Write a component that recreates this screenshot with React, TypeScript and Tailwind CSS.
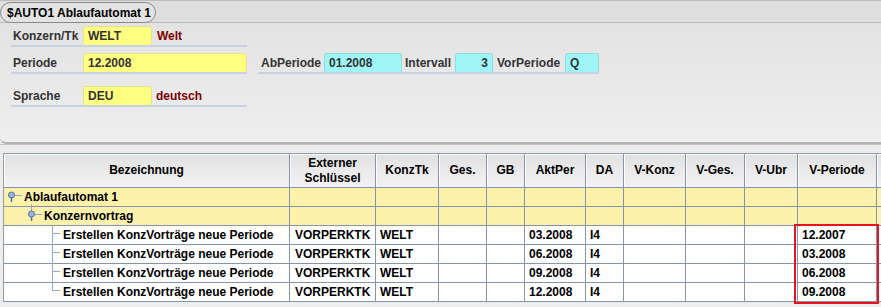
import React from 'react';

// Spaltenbreiten der Tabelle (inkl. rechter Rasterlinie)
const GRID =
  'grid grid-cols-[286px_86px_63px_48px_38px_61px_38px_62px_59px_53px_79px_60px]';

const headers = [
  'Bezeichnung',
  'Externer\nSchlüssel',
  'KonzTk',
  'Ges.',
  'GB',
  'AktPer',
  'DA',
  'V-Konz',
  'V-Ges.',
  'V-Ubr',
  'V-Periode',
  '',
];

const leafs = [
  { akt: '03.2008', vper: '12.2007' },
  { akt: '06.2008', vper: '03.2008' },
  { akt: '09.2008', vper: '06.2008' },
  { akt: '12.2008', vper: '09.2008' },
];

type TreeKind = 'root' | 'group' | 'leaf' | 'last';

function TreeGlyph({ kind }: { kind: TreeKind }) {
  const line = '#95a7c4';
  if (kind === 'root') {
    return (
      <svg width="20" height="18" className="shrink-0 overflow-visible">
        <line x1="10.5" y1="7.5" x2="18" y2="7.5" stroke={line} />
        <line x1="7.5" y1="10" x2="7.5" y2="14" stroke="#4f6fa8" strokeWidth="1.5" />
        <circle cx="7.5" cy="7" r="3" fill="#9cb6e2" stroke="#4f6fa8" />
      </svg>
    );
  }
  if (kind === 'group') {
    return (
      <svg width="40" height="18" className="shrink-0 overflow-visible">
        <line x1="27.5" y1="-3" x2="27.5" y2="4" stroke={line} />
        <line x1="30.5" y1="7.5" x2="38" y2="7.5" stroke={line} />
        <line x1="27.5" y1="10" x2="27.5" y2="14" stroke="#4f6fa8" strokeWidth="1.5" />
        <circle cx="27.5" cy="7" r="3" fill="#9cb6e2" stroke="#4f6fa8" />
      </svg>
    );
  }
  return (
    <svg width="59" height="18" className="shrink-0 overflow-visible">
      <line x1="48.5" y1="-1" x2="48.5" y2={kind === 'last' ? 8 : 19} stroke={line} />
      <line x1="48.5" y1="7.5" x2="56" y2="7.5" stroke={line} />
    </svg>
  );
}

function FormLabel({ children, w }: { children: React.ReactNode; w: string }) {
  return <span className={`${w} shrink-0 pl-[2px] text-[#333]`}>{children}</span>;
}

function Field({
  value,
  w,
  tone,
  right,
}: {
  value: string;
  w: string;
  tone: 'yellow' | 'cyan';
  right?: boolean;
}) {
  const color =
    tone === 'yellow'
      ? 'bg-[#ffff80] border-[#e2e29a]'
      : 'bg-[#a0f6f6] border-[#8fdcdc]';
  return (
    <div
      className={`${w} ${color} h-full shrink-0 rounded-t-[3px] border border-b-0 flex items-center px-[4px] text-[#333] ${
        right ? 'justify-end' : ''
      }`}
    >
      {value}
    </div>
  );
}

export default function App() {
  const cell = 'border-r border-b border-[#8495ad] flex items-center overflow-hidden whitespace-nowrap';

  return (
    <div className="w-[881px] h-[307px] overflow-hidden bg-[#ededed] font-['Liberation_Sans',Arial,sans-serif] text-[12px] font-bold leading-none">
      {/* Reiterleiste */}
      <div className="h-[23px] border-t border-[#bdbdbd] bg-[#dedede] border-b border-[#aeaeae] flex items-end">
        <div className="h-[21px] -mb-px w-[156px] rounded-full border border-[#8a8a8a] bg-[#e3e3e3] flex items-center pl-[6px] text-black">
          $AUTO1 Ablaufautomat 1
        </div>
      </div>

      {/* Kopfbereich mit Feldern */}
      <div className="h-[121px] bg-linear-to-b from-[#e3e3e3] to-[#eeeeee] border-b-2 border-[#b4b4b4] rounded-bl-[6px] pt-[3px] pl-[11px]">
        <div className="w-[236px] h-[21px] border-b-2 border-[#c9d2e3] flex items-stretch">
          <span className="self-center">
            <FormLabel w="w-[72px] block">Konzern/Tk</FormLabel>
          </span>
          <Field value="WELT" w="w-[69px]" tone="yellow" />
          <span className="self-center pl-[5px] text-[#800000]">Welt</span>
        </div>

        <div className="mt-[6px] flex items-start">
          <div className="w-[236px] h-[21px] border-b-2 border-[#c9d2e3] flex items-stretch">
            <span className="self-center">
              <FormLabel w="w-[72px] block">Periode</FormLabel>
            </span>
            <Field value="12.2008" w="w-[164px]" tone="yellow" />
          </div>
          <div className="ml-[11px] w-[341px] h-[21px] border-b-2 border-[#c9d2e3] flex items-stretch">
            <span className="self-center w-[66px] pl-[3px] text-[#333]">AbPeriode</span>
            <Field value="01.2008" w="w-[78px]" tone="cyan" />
            <span className="self-center w-[53px] pl-[3px] text-[#333]">Intervall</span>
            <Field value="3" w="w-[38px]" tone="cyan" right />
            <span className="self-center w-[72px] pl-[4px] text-[#333]">VorPeriode</span>
            <Field value="Q" w="w-[34px]" tone="cyan" />
          </div>
        </div>

        <div className="mt-[12px] w-[236px] h-[21px] border-b-2 border-[#c9d2e3] flex items-stretch">
          <span className="self-center">
            <FormLabel w="w-[72px] block">Sprache</FormLabel>
          </span>
          <Field value="DEU" w="w-[69px]" tone="yellow" />
          <span className="self-center pl-[4px] text-[#800000]">deutsch</span>
        </div>
      </div>

      {/* Tabelle */}
      <div className="border-t border-[#c4c4c4] pt-[8px] pl-[3px]">
        <div className="relative border-l border-t border-[#8f9aab] text-black">
          <div className={GRID}>
            {headers.map((h, i) => (
              <div
                key={i}
                className={`${cell} h-[34px] justify-center text-center whitespace-pre leading-[15px] bg-linear-to-b from-[#e1e1e1] to-[#f3f3f3] shadow-[inset_1px_1px_0_#ffffff]`}
              >
                {h}
              </div>
            ))}
          </div>

          <div className={`${GRID} bg-[#fcf1aa]`}>
            <div className={`${cell} h-[19px]`}>
              <TreeGlyph kind="root" />
              Ablaufautomat 1
            </div>
            {headers.slice(1).map((_, i) => (
              <div key={i} className={`${cell} h-[19px]`} />
            ))}
          </div>

          <div className={`${GRID} bg-[#fcf1aa]`}>
            <div className={`${cell} h-[19px] overflow-visible`}>
              <TreeGlyph kind="group" />
              Konzernvortrag
            </div>
            {headers.slice(1).map((_, i) => (
              <div key={i} className={`${cell} h-[19px]`} />
            ))}
          </div>

          {leafs.map((r, idx) => (
            <div key={idx} className={`${GRID} bg-white`}>
              <div className={`${cell} h-[19px] overflow-visible`}>
                <TreeGlyph kind={idx === leafs.length - 1 ? 'last' : 'leaf'} />
                Erstellen KonzVorträge neue Periode
              </div>
              <div className={`${cell} h-[19px] pl-[5px]`}>VORPERKTK</div>
              <div className={`${cell} h-[19px] pl-[4px]`}>WELT</div>
              <div className={`${cell} h-[19px]`} />
              <div className={`${cell} h-[19px]`} />
              <div className={`${cell} h-[19px] pl-[4px]`}>{r.akt}</div>
              <div className={`${cell} h-[19px] pl-[4px]`}>I4</div>
              <div className={`${cell} h-[19px]`} />
              <div className={`${cell} h-[19px]`} />
              <div className={`${cell} h-[19px]`} />
              <div className={`${cell} h-[19px] pl-[4px]`}>{r.vper}</div>
              <div className={`${cell} h-[19px]`} />
            </div>
          ))}

          {/* rote Markierung der V-Periode */}
          <div className="absolute left-[790px] top-[70px] w-[85px] h-[80px] border-2 border-[#e8141c] pointer-events-none" />
        </div>
      </div>
    </div>
  );
}
